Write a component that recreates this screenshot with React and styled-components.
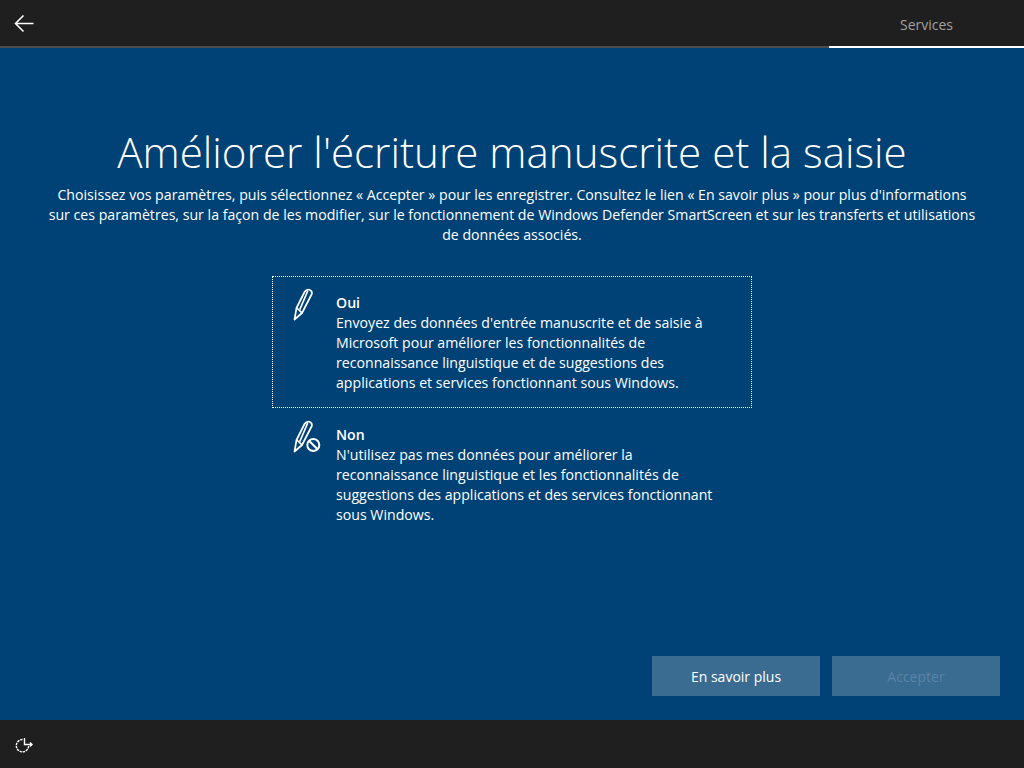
import React from 'react';
import styled, { createGlobalStyle } from 'styled-components';

const Global = createGlobalStyle`
  html, body {
    margin: 0;
    height: 100%;
    background: #004275;
  }
  body {
    font-family: "Open Sans", "Noto Sans", "Liberation Sans", sans-serif;
    color: white;
  }
`;

const Page = styled.div`
  width: 1024px;
  height: 768px;
  display: flex;
  flex-direction: column;
  overflow: hidden;
`;

const TopBar = styled.header`
  height: 46px;
  flex: none;
  display: flex;
  justify-content: space-between;
  background: #1f1f1f;
  border-bottom: 2px solid #4c4c4c;
`;

const BackButton = styled.div`
  width: 48px;
  height: 48px;
  display: flex;
  padding-top: 14px;
  padding-left: 14px;
  box-sizing: border-box;
`;

const Tab = styled.div`
  width: 195px;
  height: 48px;
  box-sizing: border-box;
  margin-bottom: -2px;
  padding-top: 15px;
  text-align: center;
  font-size: 14px;
  line-height: 20px;
  color: #a0a0a0;
  border-bottom: 2px solid #ffffff;
`;

const Main = styled.main`
  flex: 1;
  display: flex;
  flex-direction: column;
  align-items: center;
  background: #004275;
  padding-top: 74px;
`;

const Title = styled.h1`
  margin: 0;
  font-size: 42.1px;
  font-weight: 300;
  line-height: 60px;
  white-space: nowrap;
`;

const Intro = styled.p`
  margin: 3px 0 0;
  width: 960px;
  font-size: 14.15px;
  line-height: 20px;
  text-align: center;
`;

const Options = styled.div`
  width: 480px;
  margin-top: 31px;
  display: flex;
  flex-direction: column;
`;

const Option = styled.div`
  display: flex;
  box-sizing: border-box;
  height: 132px;
  padding: 17px 20px 0 20px;
  outline: ${(p) => (p.$focused ? '1px dotted #ffffff' : 'none')};
  outline-offset: -1px;
`;

const IconSlot = styled.div`
  width: 44px;
  flex: none;
  margin-top: -5px;
`;

const OptionText = styled.div`
  font-size: 14.15px;
  line-height: 20px;
`;

const OptionTitle = styled.div`
  font-weight: 600;
`;

const Actions = styled.div`
  align-self: flex-end;
  margin-top: auto;
  margin-right: 24px;
  margin-bottom: 24px;
  display: flex;
  gap: 12px;
`;

const Button = styled.div`
  width: 168px;
  height: 40px;
  display: flex;
  align-items: center;
  justify-content: center;
  background: #3a6b91;
  font-size: 14px;
  color: ${(p) => (p.$disabled ? '#5a84a6' : '#ffffff')};
`;

const BottomBar = styled.footer`
  height: 48px;
  flex: none;
  background: #1f1f1f;
  display: flex;
  align-items: center;
  padding-left: 15px;
`;

function BackIcon() {
  return (
    <svg width="20" height="20" viewBox="0 0 20 20" fill="none" stroke="#fff" strokeWidth="1.6">
      <path d="M9.5 1.5 1.5 9.5l8 8M1.5 9.5h18" />
    </svg>
  );
}

function PenShape() {
  return (
    <g strokeLinejoin="round" strokeLinecap="round">
      <path d="M2.500 31.500 4.500 20 12.500 4Q14.500 1 17.500 1.800 20.500 3 19.800 6L10 25z" />
      <path d="M15.500 3.500 8 21" />
      <path d="M4.800 20 10 24.800" />
    </g>
  );
}

function PenIcon() {
  return (
    <svg width="22" height="34" viewBox="0 0 22 34" fill="none" stroke="#fff" strokeWidth="1.700">
      <PenShape />
    </svg>
  );
}

function PenOffIcon() {
  return (
    <svg width="30" height="34" viewBox="0 0 30 34" fill="none" stroke="#fff" strokeWidth="1.700">
      <PenShape />
      <circle cx="21.300" cy="25" r="6" strokeWidth="2" />
      <path d="M17 20.700 25.600 29.300" strokeWidth="2" />
    </svg>
  );
}

function AccessIcon() {
  return (
    <svg width="18" height="18" viewBox="0 0 18 18" fill="none" stroke="#fff" strokeWidth="1.400">
      <path d="M7.500 4.500a6.200 6.200 0 1 0 6.200 6.200" strokeDasharray="2.400 0.800" />
      <path d="M9.500 3v6.500h7.500M15 7.500l2 2-2 2" />
    </svg>
  );
}

export default function App() {
  return (
    <Page>
      <Global />
      <TopBar>
        <BackButton>
          <BackIcon />
        </BackButton>
        <Tab>Services</Tab>
      </TopBar>
      <Main>
        <Title>Améliorer l'écriture manuscrite et la saisie</Title>
        <Intro>
          Choisissez vos paramètres, puis sélectionnez « Accepter » pour les enregistrer. Consultez le lien « En savoir plus » pour plus d'informations
          <br />
          sur ces paramètres, sur la façon de les modifier, sur le fonctionnement de Windows Defender SmartScreen et sur les transferts et utilisations
          <br />
          de données associés.
        </Intro>
        <Options>
          <Option $focused>
            <IconSlot>
              <PenIcon />
            </IconSlot>
            <OptionText>
              <OptionTitle>Oui</OptionTitle>
              Envoyez des données d'entrée manuscrite et de saisie à Microsoft pour améliorer les fonctionnalités de reconnaissance linguistique et de suggestions des applications et services fonctionnant sous Windows.
            </OptionText>
          </Option>
          <Option>
            <IconSlot>
              <PenOffIcon />
            </IconSlot>
            <OptionText>
              <OptionTitle>Non</OptionTitle>
              N'utilisez pas mes données pour améliorer la reconnaissance linguistique et les fonctionnalités de suggestions des applications et des services fonctionnant sous Windows.
            </OptionText>
          </Option>
        </Options>
        <Actions>
          <Button>En savoir plus</Button>
          <Button $disabled>Accepter</Button>
        </Actions>
      </Main>
      <BottomBar>
        <AccessIcon />
      </BottomBar>
    </Page>
  );
}
